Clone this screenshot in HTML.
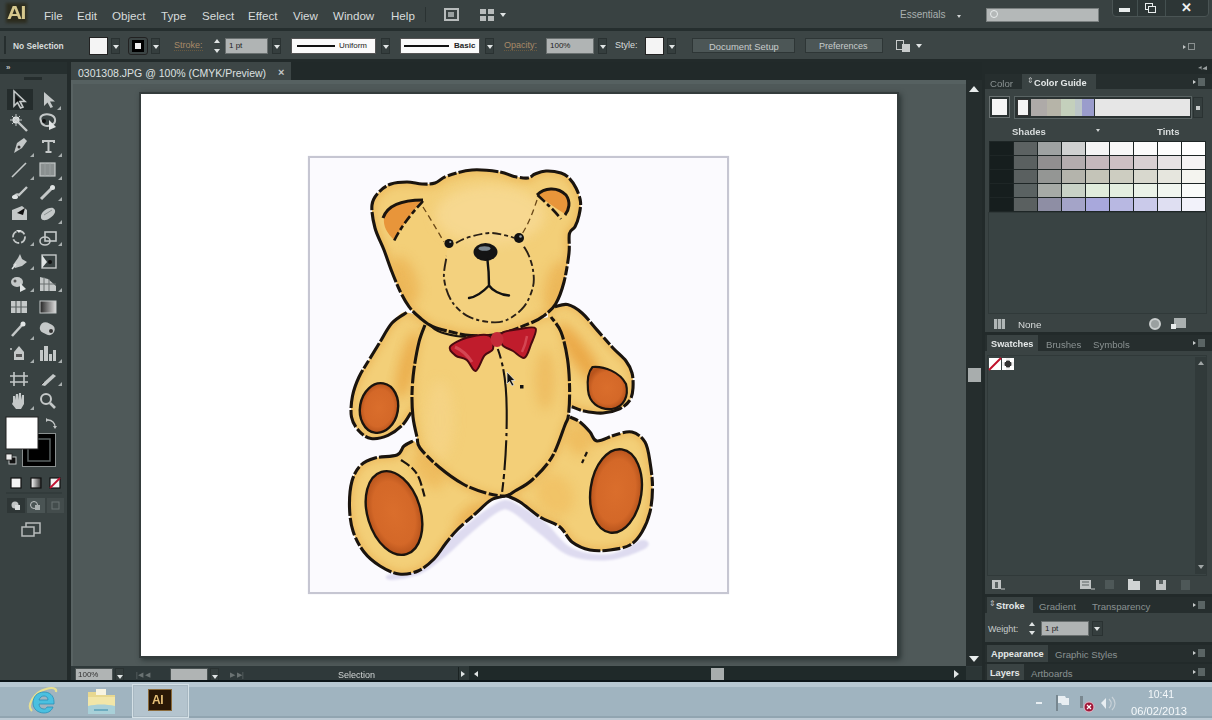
<!DOCTYPE html>
<html><head><meta charset="utf-8">
<style>
*{margin:0;padding:0;box-sizing:border-box}
html,body{width:1212px;height:720px;overflow:hidden;background:#394242;font-family:"Liberation Sans",sans-serif;color:#d8dcdc}
.a{position:absolute}
.t{position:absolute;white-space:nowrap;line-height:1}
.m{font-size:11.6px;color:#d8dcdc;top:10px}
.s{font-size:9px;color:#d8dcdc}
.dd{position:absolute;width:9px;height:16px;background:#353e3e;border:1px solid #2a3232}
.dd:after{content:"";position:absolute;left:1px;top:6px;border-left:3px solid transparent;border-right:3px solid transparent;border-top:4px solid #e0e4e4}
.tab{position:absolute;font-size:8.5px;color:#aab0b0;white-space:nowrap;line-height:1}
.tabA{position:absolute;background:#3a4343;color:#e8ecec;font-size:8.5px;font-weight:bold;white-space:nowrap;line-height:1}
.pm{position:absolute;width:12px;height:8px}
</style></head><body><div id="wrap" style="position:absolute;left:0;top:0;width:1212px;height:720px;overflow:hidden;filter:blur(0.45px)">
<!-- ============ menubar ============ -->
<div class="a" style="left:0;top:0;width:1212px;height:28px;background:#394242"></div>
<div class="a" style="left:0;top:28px;width:1212px;height:3px;background:#252e2e"></div>
<div class="a" style="left:6px;top:3px;width:21px;height:20px;background:#2c2c1e;filter:blur(1.5px)"></div>
<div class="t" style="left:7px;top:3px;font-size:19px;font-weight:bold;color:#d6c88e;letter-spacing:-1.5px;transform:scaleX(1.1);transform-origin:left top">AI</div>
<div class="t m" style="left:44px">File</div>
<div class="t m" style="left:77px">Edit</div>
<div class="t m" style="left:112px">Object</div>
<div class="t m" style="left:161px">Type</div>
<div class="t m" style="left:202px">Select</div>
<div class="t m" style="left:248px">Effect</div>
<div class="t m" style="left:293px">View</div>
<div class="t m" style="left:333px">Window</div>
<div class="t m" style="left:391px">Help</div>
<div class="a" style="left:425px;top:7px;width:1px;height:15px;background:#2a3232"></div>
<div class="a" style="left:444px;top:8px;width:15px;height:13px;border:2px solid #b8bcbc;background:#3a4242"></div>
<div class="a" style="left:448px;top:12px;width:6px;height:5px;background:#9aa0a0"></div>
<div class="a" style="left:480px;top:9px;width:6px;height:5px;background:#b8bcbc"></div>
<div class="a" style="left:488px;top:9px;width:6px;height:5px;background:#b8bcbc"></div>
<div class="a" style="left:480px;top:16px;width:6px;height:5px;background:#b8bcbc"></div>
<div class="a" style="left:488px;top:16px;width:6px;height:5px;background:#b8bcbc"></div>
<div class="a" style="left:500px;top:13px;border-left:3px solid transparent;border-right:3px solid transparent;border-top:4px solid #e0e4e4"></div>
<div class="t" style="left:900px;top:10px;font-size:10px;color:#aab0b0">Essentials</div>
<div class="a" style="left:957px;top:15px;border-left:2.5px solid transparent;border-right:2.5px solid transparent;border-top:3px solid #d0d4d4"></div>
<div class="a" style="left:986px;top:8px;width:113px;height:14px;background:#b4b8b8;border:1px solid #7a8080"></div>
<div class="a" style="left:990px;top:10px;width:8px;height:8px;border:1.5px solid #e8ecec;border-radius:50%"></div>
<div class="a" style="left:1112px;top:-2px;width:97px;height:19px;background:#2d3636;border:1px solid #4a5454;border-radius:0 0 4px 4px"></div>
<div class="a" style="left:1119px;top:8px;width:11px;height:4px;background:#e8ecec"></div>
<div class="a" style="left:1145px;top:3px;width:8px;height:7px;border:1.5px solid #e8ecec"></div>
<div class="a" style="left:1148px;top:6px;width:8px;height:7px;border:1.5px solid #e8ecec;background:#2d3636"></div>
<div class="t" style="left:1181px;top:1px;font-size:13px;font-weight:bold;color:#eef0f0">&#x2715;</div>
<div class="a" style="left:1137px;top:0;width:1px;height:16px;background:#445050"></div>
<div class="a" style="left:1165px;top:0;width:1px;height:16px;background:#445050"></div>

<!-- ============ control bar ============ -->
<div class="a" style="left:0;top:31px;width:1212px;height:28px;background:#3c4545"></div>
<div class="a" style="left:0;top:59px;width:1212px;height:3px;background:#222a2a"></div>
<div class="a" style="left:4px;top:36px;width:2px;height:18px;background:#262e2e"></div>
<div class="t s" style="left:13px;top:42px;font-weight:bold;font-size:8.4px">No Selection</div>
<div class="a" style="left:89px;top:37px;width:19px;height:18px;background:#f4f4f4;border:1px solid #222"></div>
<div class="dd" style="left:111px;top:38px"></div>
<div class="a" style="left:128px;top:37px;width:20px;height:18px;background:#3c4545;border:1px solid #222;border-radius:3px"></div>
<div class="a" style="left:132px;top:40px;width:12px;height:12px;background:#000"></div>
<div class="a" style="left:135px;top:43px;width:6px;height:6px;background:#eee"></div>
<div class="dd" style="left:151px;top:38px"></div>
<div class="t" style="left:174px;top:41px;font-size:9px;color:#a88a68;border-bottom:1px dotted #6a5a40">Stroke:</div>
<div class="a" style="left:214px;top:39px;border-left:3px solid transparent;border-right:3px solid transparent;border-bottom:4px solid #e0e4e4"></div>
<div class="a" style="left:214px;top:49px;border-left:3px solid transparent;border-right:3px solid transparent;border-top:4px solid #e0e4e4"></div>
<div class="a" style="left:225px;top:38px;width:43px;height:16px;background:#b0b4b4;border:1px solid #6a7070"></div>
<div class="t" style="left:229px;top:42px;font-size:8px;color:#222">1 pt</div>
<div class="dd" style="left:272px;top:38px"></div>
<div class="a" style="left:291px;top:38px;width:85px;height:16px;background:#fafafa;border:1px solid #555"></div>
<div class="a" style="left:297px;top:45px;width:38px;height:2px;background:#111"></div>
<div class="t" style="left:339px;top:42px;font-size:8px;color:#222">Uniform</div>
<div class="dd" style="left:381px;top:38px"></div>
<div class="a" style="left:400px;top:38px;width:80px;height:16px;background:#fafafa;border:1px solid #555"></div>
<div class="a" style="left:404px;top:45px;width:45px;height:2px;background:#111"></div>
<div class="t" style="left:454px;top:42px;font-size:8px;color:#222;font-weight:bold">Basic</div>
<div class="dd" style="left:485px;top:38px"></div>
<div class="t" style="left:504px;top:41px;font-size:9px;color:#a88a68;border-bottom:1px dotted #6a5a40">Opacity:</div>
<div class="a" style="left:546px;top:38px;width:48px;height:16px;background:#b0b4b4;border:1px solid #6a7070"></div>
<div class="t" style="left:550px;top:42px;font-size:8px;color:#222">100%</div>
<div class="dd" style="left:598px;top:38px"></div>
<div class="t s" style="left:615px;top:41px">Style:</div>
<div class="a" style="left:645px;top:37px;width:19px;height:18px;background:#f4f4f4;border:1px solid #222"></div>
<div class="dd" style="left:667px;top:38px"></div>
<div class="a" style="left:692px;top:38px;width:103px;height:15px;background:#4c5656;border:1px solid #2e3636"></div>
<div class="t s" style="left:709px;top:42px;color:#c8cccc;font-size:9.4px">Document Setup</div>
<div class="a" style="left:805px;top:38px;width:78px;height:15px;background:#4c5656;border:1px solid #2e3636"></div>
<div class="t s" style="left:819px;top:42px;color:#c8cccc">Preferences</div>
<div class="a" style="left:896px;top:40px;width:8px;height:10px;border:1.5px solid #c8cccc"></div>
<div class="a" style="left:902px;top:44px;width:8px;height:8px;background:#c8cccc"></div>
<div class="a" style="left:916px;top:44px;border-left:3px solid transparent;border-right:3px solid transparent;border-top:4px solid #e0e4e4"></div>
<div class="a" style="left:1188px;top:43px;width:7px;height:7px;border:1px solid #8a9090"></div>
<div class="a" style="left:1183px;top:45px;border-top:2px solid transparent;border-bottom:2px solid transparent;border-left:3px solid #c0c4c4"></div>

<!-- ============ tools panel ============ -->
<div class="a" style="left:0;top:62px;width:67px;height:620px;background:#394242"></div>
<div class="a" style="left:0;top:62px;width:67px;height:12px;background:#262f2f"></div>
<div class="t" style="left:6px;top:64px;font-size:8px;color:#c0c4c4;font-weight:bold">&#187;</div>
<div class="a" style="left:24px;top:77px;width:18px;height:3px;background:#252d2d"></div>
<div class="a" style="left:67px;top:62px;width:4px;height:620px;background:#232b2b"></div>
<div class="a" style="left:7px;top:89px;width:26px;height:21px;background:#242c2c"></div>
<svg class="a" style="left:0;top:0" width="67" height="560" viewBox="0 0 67 560"><defs><linearGradient id="gr"><stop offset="0" stop-color="#222"/><stop offset="1" stop-color="#ddd"/></linearGradient><linearGradient id="gr2"><stop offset="0" stop-color="#fff"/><stop offset="1" stop-color="#333"/></linearGradient></defs><path d="M14,91 L14,106 L17.5,102.5 L20.5,108 L23,107 L20,101.5 L25,101.5Z" fill="none" stroke="#c4c8c8" stroke-width="1.6"/><path d="M16,96 L16,102 L20,100Z" fill="#111"/><path d="M44,92 L44,106 L47.5,102.5 L50.5,108 L53,107 L50,101.5 L55,101.5Z" fill="#c4c8c8"/><path d="M57,110 l4,0 l0,-4z" fill="#a8aeae"/><circle cx="16" cy="120" r="3.5" fill="#e0e4e4"/><path d="M12,116 l8,8 M20,116 l-8,8 M16,114 v12 M10,120 h12" stroke="#c4c8c8" stroke-width="1"/><path d="M18,122 L27,131" stroke="#c4c8c8" stroke-width="2.4"/><path d="M41,121 C38,115 46,113 51,115 C56,117 57,123 51,125 C47,127 42,126 41,121Z" fill="none" stroke="#c4c8c8" stroke-width="2"/><circle cx="44" cy="121" r="2" fill="#111"/><path d="M49,120 L49,130 L56,127Z" fill="#e0e4e4"/><path d="M14,153 L17,143 L24,138 L27,141 L22,148 Z" fill="#c4c8c8"/><circle cx="19" cy="147" r="1.5" fill="#333"/><path d="M30,157 l4,0 l0,-4z" fill="#a8aeae"/><path d="M42,140 h13 v3 h-2 v-1 h-3.5 v9 h2 v2 h-6 v-2 h2 v-9 h-3.5 v1 h-2z" fill="#c4c8c8"/><path d="M58,157 l4,0 l0,-4z" fill="#a8aeae"/><path d="M12,177 L26,163" stroke="#c4c8c8" stroke-width="1.6"/><path d="M30,180 l4,0 l0,-4z" fill="#a8aeae"/><rect x="40" y="163" width="15" height="13" fill="#8a9090" stroke="#c4c8c8" stroke-width="1.2"/><path d="M45,163 v13 M50,163 v13" stroke="#9ca2a2" stroke-width="0.8"/><path d="M58,180 l4,0 l0,-4z" fill="#a8aeae"/><path d="M13,198 C15,194 18,194 19,195 L27,187" stroke="#c4c8c8" stroke-width="2.4" fill="none"/><ellipse cx="15" cy="197" rx="3" ry="2" fill="#e0e4e4"/><path d="M41,199 L52,188" stroke="#c4c8c8" stroke-width="3"/><circle cx="52.5" cy="187.5" r="2.5" fill="#e0e4e4"/><path d="M58,201 l4,0 l0,-4z" fill="#a8aeae"/><path d="M12,210 L22,206 L27,210 L27,220 L12,220Z" fill="#c4c8c8"/><path d="M17,213 L25,208 L23,215Z" fill="#111"/><path d="M41,218 C40,212 48,207 53,208 C57,210 55,215 50,218 C46,221 42,221 41,218Z" fill="#c4c8c8"/><path d="M44,215 L52,210" stroke="#8a9090" stroke-width="1"/><path d="M58,224 l4,0 l0,-4z" fill="#a8aeae"/><circle cx="19" cy="237" r="6" fill="none" stroke="#c4c8c8" stroke-width="1.8" stroke-dasharray="7 2"/><path d="M16,230 l5,0 l-2,3z" fill="#e0e4e4"/><path d="M30,246 l4,0 l0,-4z" fill="#a8aeae"/><rect x="45" y="232" width="11" height="9" fill="none" stroke="#c4c8c8" stroke-width="1.6"/><ellipse cx="45" cy="241" rx="5" ry="4" fill="none" stroke="#c4c8c8" stroke-width="1.6"/><path d="M58,246 l4,0 l0,-4z" fill="#a8aeae"/><path d="M13,265 L18,258 L20,254 L22,259 L27,262 L22,266 L15,268Z" fill="#c4c8c8"/><path d="M12,269 L16,264" stroke="#e0e4e4" stroke-width="1.5"/><path d="M30,270 l4,0 l0,-4z" fill="#a8aeae"/><rect x="42" y="255" width="14" height="13" fill="none" stroke="#c4c8c8" stroke-width="1.4"/><path d="M42,255 L47,262 L42,268Z" fill="#e0e4e4"/><circle cx="50" cy="262" r="2" fill="#111"/><ellipse cx="17" cy="282" rx="6" ry="5" fill="#c4c8c8"/><path d="M20,283 L20,292 L26,289Z" fill="#e0e4e4"/><circle cx="15" cy="281" r="1.5" fill="#555"/><path d="M30,292 l4,0 l0,-4z" fill="#a8aeae"/><path d="M40,277 L48,279 L56,286 L56,291 L40,291Z" fill="#c4c8c8"/><path d="M40,284 h16 M44,277 v14 M49,279 v12" stroke="#6a7070" stroke-width="1"/><path d="M58,292 l4,0 l0,-4z" fill="#a8aeae"/><rect x="11" y="301" width="16" height="12" fill="#c4c8c8"/><path d="M11,307 h16 M16,301 v12 M21,301 v12" stroke="#5a6262" stroke-width="1.2"/><rect x="40" y="301" width="16" height="12" fill="url(#gr)" stroke="#c4c8c8" stroke-width="1"/><path d="M12,336 L22,325" stroke="#c4c8c8" stroke-width="2.6"/><circle cx="23" cy="324" r="2.5" fill="#e0e4e4"/><path d="M30,340 l4,0 l0,-4z" fill="#a8aeae"/><rect x="40" y="323" width="15" height="11" rx="5" fill="#c4c8c8" transform="rotate(25 47 328)"/><circle cx="51" cy="331" r="2" fill="#333"/><path d="M14,352 L19,346 L24,352 L24,360 L14,360Z" fill="#c4c8c8"/><rect x="16" y="354" width="6" height="3" fill="#555"/><circle cx="11" cy="349" r="1" fill="#c4c8c8"/><path d="M30,363 l4,0 l0,-4z" fill="#a8aeae"/><path d="M40,350 h3 v11 h-3z M44,346 h4 v15 h-4z M49,354 h3 v7 h-3z M53,350 h3 v11 h-3z" fill="#c4c8c8"/><path d="M58,363 l4,0 l0,-4z" fill="#a8aeae"/><path d="M14,372 v14 M24,372 v14 M10,376 h18 M10,382 h18" stroke="#c4c8c8" stroke-width="1.6"/><path d="M41,385 L53,374 L56,376 L45,386Z" fill="#c4c8c8"/><path d="M41,385 L44,382" stroke="#333"/><path d="M58,386 l4,0 l0,-4z" fill="#a8aeae"/><path d="M13,402 L13,396 L15,396 L15,400 L16,394 L18,394 L18,400 L19,393 L21,393 L21,400 L22,395 L24,395 L24,404 L21,409 L16,409 L12,404Z" fill="#c4c8c8"/><path d="M30,410 l4,0 l0,-4z" fill="#a8aeae"/><circle cx="46" cy="399" r="5" fill="none" stroke="#c4c8c8" stroke-width="2"/><path d="M50,403 L55,408" stroke="#c4c8c8" stroke-width="2.6"/><rect x="22.5" y="433.5" width="33" height="33" fill="#000" stroke="#8a9090" stroke-width="1"/><rect x="28" y="439" width="22" height="22" fill="none" stroke="#5a6262" stroke-width="1.5"/><rect x="31" y="442" width="16" height="16" fill="#000"/><rect x="6" y="417" width="32" height="32" fill="#ffffff" stroke="#222" stroke-width="1"/><path d="M48,420 C52,420 55,423 55,427" fill="none" stroke="#c0c4c4" stroke-width="1.3"/><path d="M46,418 l3,2 l-3,2z M53,426 l2,3 l2,-3z" fill="#c0c4c4"/><rect x="9" y="457" width="7" height="7" fill="#111" stroke="#c0c4c4" stroke-width="1"/><rect x="6" y="454" width="6" height="6" fill="#eee" stroke="#222" stroke-width="0.8"/><rect x="11" y="478" width="10" height="10" fill="#f4f4f4" stroke="#111" stroke-width="1.2"/><rect x="31" y="478" width="10" height="10" fill="url(#gr2)" stroke="#111" stroke-width="1.2"/><rect x="50" y="478" width="10" height="10" fill="#f4f4f4" stroke="#111" stroke-width="1.2"/><path d="M50,488 L60,478" stroke="#c01030" stroke-width="1.8"/><path d="M6,493 h56" stroke="#2c3434" stroke-width="1"/><rect x="7" y="498" width="18" height="15" fill="#2e3636"/><circle cx="15" cy="505" r="3.5" fill="#c0c4c4"/><rect x="15" y="505" width="5" height="5" fill="#d8dcdc"/><rect x="27" y="498" width="18" height="15" fill="#4a5454"/><circle cx="34" cy="505" r="3.5" fill="none" stroke="#c0c4c4"/><rect x="35" y="505" width="5" height="5" fill="#aab0b0"/><rect x="47" y="498" width="17" height="15" fill="#434c4c"/><rect x="52" y="502" width="7" height="7" fill="none" stroke="#6a7272"/><rect x="26" y="523" width="14" height="10" fill="none" stroke="#b8bcbc" stroke-width="1.5"/><rect x="22" y="527" width="12" height="9" fill="#394242" stroke="#b8bcbc" stroke-width="1.5"/></svg>

<!-- ============ document area ============ -->
<div class="a" style="left:71px;top:62px;width:912px;height:18px;background:#212929"></div>
<div class="a" style="left:71px;top:62px;width:220px;height:18px;background:#3d4646"></div>
<div class="t" style="left:78px;top:68px;font-size:10.5px;color:#dde1e1">0301308.JPG @ 100% (CMYK/Preview)</div>
<div class="t" style="left:278px;top:67px;font-size:11px;color:#c4c8c8;font-weight:bold">&#215;</div>
<div class="a" style="left:71px;top:80px;width:895px;height:587px;background:#4f5959"></div>
<div class="a" style="left:71px;top:80px;width:895px;height:4px;background:#566161"></div>
<div class="a" style="left:71px;top:80px;width:2px;height:586px;background:#586262"></div>
<div class="a" style="left:139px;top:92px;width:760px;height:566px;background:#343c3c;box-shadow:2px 2px 5px rgba(20,28,28,0.6)"></div>
<div class="a" style="left:141px;top:94px;width:756px;height:562px;background:#ffffff"></div>
<div class="a" style="left:308px;top:156px;width:421px;height:438px;background:#fbfafe;border:2px solid #c6c6d2;box-shadow:0 0 1px #d8d8e4"></div>
<svg class="a" style="left:0;top:0" width="1212" height="720" viewBox="0 0 1212 720"><defs><filter id="bl" x="-20%" y="-20%" width="140%" height="140%"><feGaussianBlur stdDeviation="3"/></filter><radialGradient id="padg"><stop offset="0" stop-color="#da6e2c"/><stop offset="0.75" stop-color="#d46828"/><stop offset="1" stop-color="#b8541c"/></radialGradient><filter id="bl3" x="-50%" y="-50%" width="200%" height="200%"><feGaussianBlur stdDeviation="6"/></filter><filter id="bl2" x="-20%" y="-20%" width="140%" height="140%"><feGaussianBlur stdDeviation="1.2"/></filter><clipPath id="c1"><path d="M413.0,441.0 C410.3,440.7 406.7,443.7 404.0,446.0 C401.3,448.3 401.8,453.0 397.0,455.0 C392.2,457.0 381.0,456.3 375.0,458.0 C369.0,459.7 364.8,461.2 361.0,465.0 C357.2,468.8 353.9,474.0 352.0,481.0 C350.1,488.0 349.3,498.7 349.5,507.0 C349.7,515.3 350.6,523.5 353.0,531.0 C355.4,538.5 359.5,546.2 364.0,552.0 C368.5,557.8 374.2,562.3 380.0,566.0 C385.8,569.7 392.7,573.2 399.0,574.0 C405.3,574.8 412.2,573.5 418.0,571.0 C423.8,568.5 429.3,563.7 434.0,559.0 C438.7,554.3 442.0,548.0 446.0,543.0 C450.0,538.0 453.2,533.8 458.0,529.0 C462.8,524.2 469.5,518.8 475.0,514.0 C480.5,509.2 486.0,503.0 491.0,500.0 C496.0,497.0 505.8,497.2 505.0,496.0 C504.2,494.8 493.0,495.0 486.0,493.0 C479.0,491.0 470.8,488.3 463.0,484.0 C455.2,479.7 446.2,473.0 439.0,467.0 C431.8,461.0 424.3,452.3 420.0,448.0 C415.7,443.7 415.7,441.3 413.0,441.0Z"/></clipPath><clipPath id="c2"><path d="M495.0,497.0 C496.7,496.3 508.8,493.8 515.0,491.0 C521.2,488.2 525.8,485.7 532.0,480.0 C538.2,474.3 546.5,466.2 552.0,457.0 C557.5,447.8 562.0,431.7 565.0,425.0 C568.0,418.3 567.5,417.5 570.0,417.0 C572.5,416.5 576.7,419.5 580.0,422.0 C583.3,424.5 587.2,428.8 590.0,432.0 C592.8,435.2 592.8,440.5 597.0,441.0 C601.2,441.5 609.2,436.5 615.0,435.0 C620.8,433.5 627.0,430.8 632.0,432.0 C637.0,433.2 642.0,437.0 645.0,442.0 C648.0,447.0 648.8,454.5 650.0,462.0 C651.2,469.5 652.5,478.7 652.5,487.0 C652.5,495.3 651.8,504.5 650.0,512.0 C648.2,519.5 645.3,526.5 642.0,532.0 C638.7,537.5 635.3,542.0 630.0,545.0 C624.7,548.0 616.7,549.2 610.0,550.0 C603.3,550.8 596.3,551.3 590.0,550.0 C583.7,548.7 577.0,545.8 572.0,542.0 C567.0,538.2 565.3,531.2 560.0,527.0 C554.7,522.8 546.7,521.2 540.0,517.0 C533.3,512.8 525.8,505.7 520.0,502.0 C514.2,498.3 509.2,495.8 505.0,495.0 C500.8,494.2 493.3,497.7 495.0,497.0Z"/></clipPath><clipPath id="c3"><path d="M406.7,312.5 C400.7,311.3 396.4,318.1 392.0,323.0 C387.6,327.9 383.8,335.8 380.0,342.0 C376.2,348.2 372.5,354.2 369.0,360.0 C365.5,365.8 361.8,371.0 359.0,377.0 C356.2,383.0 353.8,389.3 352.5,396.0 C351.2,402.7 350.4,411.2 351.5,417.0 C352.6,422.8 355.8,427.4 359.0,431.0 C362.2,434.6 366.2,437.8 371.0,438.5 C375.8,439.2 382.8,437.6 388.0,435.4 C393.2,433.1 398.7,428.8 402.5,425.0 C406.3,421.2 408.4,416.7 411.0,412.5 C413.6,408.3 415.2,413.8 418.0,400.0 C420.8,386.2 429.9,344.6 428.0,330.0 C426.1,315.4 412.7,313.7 406.7,312.5Z"/></clipPath><clipPath id="c4"><path d="M555.0,306.7 C558.2,304.5 563.0,303.6 567.5,304.6 C572.0,305.7 577.1,308.8 582.0,313.0 C586.9,317.2 591.5,323.8 596.7,329.6 C601.9,335.4 608.1,342.8 613.0,348.0 C617.9,353.2 622.8,356.8 626.0,361.0 C629.2,365.2 630.8,368.5 632.0,373.0 C633.2,377.5 633.3,383.5 633.0,388.0 C632.7,392.5 632.2,396.5 630.0,400.0 C627.8,403.5 624.1,406.6 619.6,408.8 C615.1,410.9 608.9,412.6 603.0,413.0 C597.1,413.4 589.2,412.1 584.0,411.0 C578.8,409.9 575.4,408.5 571.7,406.7 C568.0,404.9 566.0,414.8 562.0,400.0 C558.0,385.2 549.2,333.6 548.0,318.0 C546.8,302.4 551.8,308.9 555.0,306.7Z"/></clipPath><clipPath id="c5"><path d="M425.0,325.0 C411.5,327.0 420.8,334.7 419.0,342.0 C417.2,349.3 415.2,360.3 414.0,369.0 C412.8,377.7 412.2,386.0 412.0,394.0 C411.8,402.0 412.2,409.8 413.0,417.0 C413.8,424.2 415.8,431.8 417.0,437.0 C418.2,442.2 416.3,443.0 420.0,448.0 C423.7,453.0 431.8,461.0 439.0,467.0 C446.2,473.0 455.2,479.7 463.0,484.0 C470.8,488.3 479.0,491.0 486.0,493.0 C493.0,495.0 500.2,496.3 505.0,496.0 C509.8,495.7 510.5,493.7 515.0,491.0 C519.5,488.3 525.8,485.7 532.0,480.0 C538.2,474.3 546.5,466.2 552.0,457.0 C557.5,447.8 562.2,432.0 565.0,425.0 C567.8,418.0 567.7,421.2 568.5,415.0 C569.3,408.8 569.8,397.3 569.6,388.0 C569.4,378.7 568.9,368.3 567.5,359.0 C566.1,349.7 563.8,339.0 561.0,332.0 C558.2,325.0 561.2,317.3 551.0,317.0 C540.8,316.7 521.0,328.7 500.0,330.0 C479.0,331.3 438.5,323.0 425.0,325.0Z"/></clipPath><clipPath id="c6"><path d="M384.0,250.0 C381.2,242.7 377.0,235.5 375.0,228.0 C373.0,220.5 371.3,211.0 372.0,205.0 C372.7,199.0 375.8,195.5 379.0,192.0 C382.2,188.5 386.3,185.7 391.0,184.0 C395.7,182.3 401.8,182.0 407.0,182.0 C412.2,182.0 417.3,183.8 422.0,184.0 C426.7,184.2 430.8,184.3 435.0,183.0 C439.2,181.7 440.8,178.2 447.0,176.0 C453.2,173.8 463.2,170.7 472.0,170.0 C480.8,169.3 493.0,170.9 500.0,172.0 C507.0,173.1 509.3,175.5 514.0,176.5 C518.7,177.5 524.5,178.4 528.0,178.0 C531.5,177.6 532.0,175.2 535.0,174.0 C538.0,172.8 541.7,171.2 546.0,171.0 C550.3,170.8 557.2,171.8 561.0,173.0 C564.8,174.2 566.5,175.5 569.0,178.0 C571.5,180.5 574.1,184.1 576.0,188.0 C577.9,191.9 580.0,197.1 580.5,201.7 C581.0,206.3 579.9,211.3 579.0,215.5 C578.1,219.7 576.6,223.7 575.0,226.7 C573.4,229.7 570.4,229.2 569.4,233.6 C568.4,238.0 569.9,244.9 569.0,253.0 C568.1,261.1 566.2,273.5 564.0,282.0 C561.8,290.5 558.9,298.4 555.6,304.0 C552.3,309.6 547.8,312.6 544.0,315.6 C540.2,318.6 540.3,318.9 533.0,322.0 C525.7,325.1 510.3,331.7 500.0,334.0 C489.7,336.3 478.4,335.8 471.0,335.6 C463.6,335.4 461.9,334.5 455.6,333.0 C449.3,331.5 438.9,329.2 433.0,326.7 C427.1,324.2 424.0,321.1 420.0,317.8 C416.0,314.5 412.3,311.2 409.0,306.7 C405.7,302.2 402.8,296.8 400.0,291.0 C397.2,285.2 394.7,278.8 392.0,272.0 C389.3,265.2 386.8,257.3 384.0,250.0Z"/></clipPath></defs><path d="M440.0,548.0 C448.3,540.3 461.3,529.0 470.0,522.0 C478.7,515.0 486.0,509.7 492.0,506.0 C498.0,502.3 501.3,500.0 506.0,500.0 C510.7,500.0 513.5,502.3 520.0,506.0 C526.5,509.7 536.3,515.0 545.0,522.0 C553.7,529.0 561.2,542.7 572.0,548.0 C582.8,553.3 598.3,555.3 610.0,554.0 C621.7,552.7 636.0,541.0 642.0,540.0 C648.0,539.0 651.3,544.7 646.0,548.0 C640.7,551.3 622.7,558.7 610.0,560.0 C597.3,561.3 581.7,560.3 570.0,556.0 C558.3,551.7 549.7,541.3 540.0,534.0 C530.3,526.7 519.0,515.7 512.0,512.0 C505.0,508.3 505.0,508.3 498.0,512.0 C491.0,515.7 478.7,526.7 470.0,534.0 C461.3,541.3 454.3,549.3 446.0,556.0 C437.7,562.7 429.0,570.0 420.0,574.0 C411.0,578.0 397.3,579.8 392.0,580.0 C386.7,580.2 383.3,577.0 388.0,575.0 C392.7,573.0 411.3,572.5 420.0,568.0 C428.7,563.5 431.7,555.7 440.0,548.0Z" fill="#dedbf0" filter="url(#bl2)"/>
<path d="M413.0,441.0 C410.3,440.7 406.7,443.7 404.0,446.0 C401.3,448.3 401.8,453.0 397.0,455.0 C392.2,457.0 381.0,456.3 375.0,458.0 C369.0,459.7 364.8,461.2 361.0,465.0 C357.2,468.8 353.9,474.0 352.0,481.0 C350.1,488.0 349.3,498.7 349.5,507.0 C349.7,515.3 350.6,523.5 353.0,531.0 C355.4,538.5 359.5,546.2 364.0,552.0 C368.5,557.8 374.2,562.3 380.0,566.0 C385.8,569.7 392.7,573.2 399.0,574.0 C405.3,574.8 412.2,573.5 418.0,571.0 C423.8,568.5 429.3,563.7 434.0,559.0 C438.7,554.3 442.0,548.0 446.0,543.0 C450.0,538.0 453.2,533.8 458.0,529.0 C462.8,524.2 469.5,518.8 475.0,514.0 C480.5,509.2 486.0,503.0 491.0,500.0 C496.0,497.0 505.8,497.2 505.0,496.0 C504.2,494.8 493.0,495.0 486.0,493.0 C479.0,491.0 470.8,488.3 463.0,484.0 C455.2,479.7 446.2,473.0 439.0,467.0 C431.8,461.0 424.3,452.3 420.0,448.0 C415.7,443.7 415.7,441.3 413.0,441.0Z" fill="#f3cf78"/><g clip-path="url(#c1)"><ellipse cx="428" cy="470" rx="12" ry="22" transform="rotate(-40 428 470)" fill="#eaa842" opacity="0.45" filter="url(#bl3)"/><ellipse cx="470" cy="515" rx="18" ry="8" transform="rotate(-40 470 515)" fill="#e8a23c" opacity="0.5" filter="url(#bl3)"/><path d="M413.0,441.0 C410.3,440.7 406.7,443.7 404.0,446.0 C401.3,448.3 401.8,453.0 397.0,455.0 C392.2,457.0 381.0,456.3 375.0,458.0 C369.0,459.7 364.8,461.2 361.0,465.0 C357.2,468.8 353.9,474.0 352.0,481.0 C350.1,488.0 349.3,498.7 349.5,507.0 C349.7,515.3 350.6,523.5 353.0,531.0 C355.4,538.5 359.5,546.2 364.0,552.0 C368.5,557.8 374.2,562.3 380.0,566.0 C385.8,569.7 392.7,573.2 399.0,574.0 C405.3,574.8 412.2,573.5 418.0,571.0 C423.8,568.5 429.3,563.7 434.0,559.0 C438.7,554.3 442.0,548.0 446.0,543.0 C450.0,538.0 453.2,533.8 458.0,529.0 C462.8,524.2 469.5,518.8 475.0,514.0 C480.5,509.2 486.0,503.0 491.0,500.0 C496.0,497.0 505.8,497.2 505.0,496.0 C504.2,494.8 493.0,495.0 486.0,493.0 C479.0,491.0 470.8,488.3 463.0,484.0 C455.2,479.7 446.2,473.0 439.0,467.0 C431.8,461.0 424.3,452.3 420.0,448.0 C415.7,443.7 415.7,441.3 413.0,441.0Z" fill="none" stroke="#e8a848" stroke-width="9" filter="url(#bl)" opacity="0.45"/></g>
<path d="M495.0,497.0 C496.7,496.3 508.8,493.8 515.0,491.0 C521.2,488.2 525.8,485.7 532.0,480.0 C538.2,474.3 546.5,466.2 552.0,457.0 C557.5,447.8 562.0,431.7 565.0,425.0 C568.0,418.3 567.5,417.5 570.0,417.0 C572.5,416.5 576.7,419.5 580.0,422.0 C583.3,424.5 587.2,428.8 590.0,432.0 C592.8,435.2 592.8,440.5 597.0,441.0 C601.2,441.5 609.2,436.5 615.0,435.0 C620.8,433.5 627.0,430.8 632.0,432.0 C637.0,433.2 642.0,437.0 645.0,442.0 C648.0,447.0 648.8,454.5 650.0,462.0 C651.2,469.5 652.5,478.7 652.5,487.0 C652.5,495.3 651.8,504.5 650.0,512.0 C648.2,519.5 645.3,526.5 642.0,532.0 C638.7,537.5 635.3,542.0 630.0,545.0 C624.7,548.0 616.7,549.2 610.0,550.0 C603.3,550.8 596.3,551.3 590.0,550.0 C583.7,548.7 577.0,545.8 572.0,542.0 C567.0,538.2 565.3,531.2 560.0,527.0 C554.7,522.8 546.7,521.2 540.0,517.0 C533.3,512.8 525.8,505.7 520.0,502.0 C514.2,498.3 509.2,495.8 505.0,495.0 C500.8,494.2 493.3,497.7 495.0,497.0Z" fill="#f3cf78"/><g clip-path="url(#c2)"><ellipse cx="578" cy="440" rx="12" ry="16" transform="rotate(-30 578 440)" fill="#eaa842" opacity="0.45" filter="url(#bl3)"/><ellipse cx="555" cy="495" rx="18" ry="22" transform="rotate(-30 555 495)" fill="#eeae48" opacity="0.35" filter="url(#bl3)"/><path d="M495.0,497.0 C496.7,496.3 508.8,493.8 515.0,491.0 C521.2,488.2 525.8,485.7 532.0,480.0 C538.2,474.3 546.5,466.2 552.0,457.0 C557.5,447.8 562.0,431.7 565.0,425.0 C568.0,418.3 567.5,417.5 570.0,417.0 C572.5,416.5 576.7,419.5 580.0,422.0 C583.3,424.5 587.2,428.8 590.0,432.0 C592.8,435.2 592.8,440.5 597.0,441.0 C601.2,441.5 609.2,436.5 615.0,435.0 C620.8,433.5 627.0,430.8 632.0,432.0 C637.0,433.2 642.0,437.0 645.0,442.0 C648.0,447.0 648.8,454.5 650.0,462.0 C651.2,469.5 652.5,478.7 652.5,487.0 C652.5,495.3 651.8,504.5 650.0,512.0 C648.2,519.5 645.3,526.5 642.0,532.0 C638.7,537.5 635.3,542.0 630.0,545.0 C624.7,548.0 616.7,549.2 610.0,550.0 C603.3,550.8 596.3,551.3 590.0,550.0 C583.7,548.7 577.0,545.8 572.0,542.0 C567.0,538.2 565.3,531.2 560.0,527.0 C554.7,522.8 546.7,521.2 540.0,517.0 C533.3,512.8 525.8,505.7 520.0,502.0 C514.2,498.3 509.2,495.8 505.0,495.0 C500.8,494.2 493.3,497.7 495.0,497.0Z" fill="none" stroke="#e8a848" stroke-width="9" filter="url(#bl)" opacity="0.45"/></g>
<path d="M413.0,441.0 C411.5,441.8 406.7,443.7 404.0,446.0 C401.3,448.3 401.8,453.0 397.0,455.0 C392.2,457.0 381.0,456.3 375.0,458.0 C369.0,459.7 364.8,461.2 361.0,465.0 C357.2,468.8 353.9,474.0 352.0,481.0 C350.1,488.0 349.3,498.7 349.5,507.0 C349.7,515.3 350.6,523.5 353.0,531.0 C355.4,538.5 359.5,546.2 364.0,552.0 C368.5,557.8 374.2,562.3 380.0,566.0 C385.8,569.7 392.7,573.2 399.0,574.0 C405.3,574.8 412.2,573.5 418.0,571.0 C423.8,568.5 429.3,563.7 434.0,559.0 C438.7,554.3 442.0,548.0 446.0,543.0 C450.0,538.0 453.2,533.8 458.0,529.0 C462.8,524.2 469.5,518.8 475.0,514.0 C480.5,509.2 486.0,503.0 491.0,500.0 C496.0,497.0 502.7,496.7 505.0,496.0" fill="none" stroke="#1a140e" stroke-width="3.1" stroke-dasharray="40 2 18 2.5 9 2" stroke-linecap="butt"/>
<path d="M505.0,495.0 C507.5,496.2 514.2,498.3 520.0,502.0 C525.8,505.7 533.3,512.8 540.0,517.0 C546.7,521.2 554.7,522.8 560.0,527.0 C565.3,531.2 567.0,538.2 572.0,542.0 C577.0,545.8 583.7,548.7 590.0,550.0 C596.3,551.3 603.3,550.8 610.0,550.0 C616.7,549.2 624.7,548.0 630.0,545.0 C635.3,542.0 638.7,537.5 642.0,532.0 C645.3,526.5 648.2,519.5 650.0,512.0 C651.8,504.5 652.5,495.3 652.5,487.0 C652.5,478.7 651.2,469.5 650.0,462.0 C648.8,454.5 648.0,447.0 645.0,442.0 C642.0,437.0 637.0,433.2 632.0,432.0 C627.0,430.8 620.8,433.5 615.0,435.0 C609.2,436.5 601.2,441.5 597.0,441.0 C592.8,440.5 592.8,435.2 590.0,432.0 C587.2,428.8 583.3,424.5 580.0,422.0 C576.7,419.5 571.7,417.8 570.0,417.0" fill="none" stroke="#1a140e" stroke-width="3.1" stroke-dasharray="40 2 18 2.5 9 2" stroke-linecap="butt"/>
<path d="M401.0,460.0 C402.8,461.3 409.0,465.0 412.0,468.0 C415.0,471.0 416.8,473.0 419.0,478.0 C421.2,483.0 424.0,494.7 425.0,498.0" fill="none" stroke="#1a140e" stroke-width="2.2" stroke-dasharray="10 3 8 3" stroke-linecap="butt"/>
<path d="M587.0,452.0 C586.2,453.8 582.8,461.2 582.0,463.0" fill="none" stroke="#1a140e" stroke-width="2.2" stroke-dasharray="5 3" stroke-linecap="butt"/>
<ellipse cx="394" cy="513" rx="26.5" ry="43" transform="rotate(-17 394 513)" fill="url(#padg)" stroke="#1a140e" stroke-width="2.4"/><ellipse cx="392" cy="509" rx="14.575000000000001" ry="25.8" transform="rotate(-17 394 513)" fill="#d06a28" opacity="0.0"/>
<ellipse cx="616" cy="491" rx="25.5" ry="42" transform="rotate(8 616 491)" fill="url(#padg)" stroke="#1a140e" stroke-width="2.4"/><ellipse cx="614" cy="487" rx="14.025" ry="25.2" transform="rotate(8 616 491)" fill="#d06a28" opacity="0.0"/>
<path d="M406.7,312.5 C400.7,311.3 396.4,318.1 392.0,323.0 C387.6,327.9 383.8,335.8 380.0,342.0 C376.2,348.2 372.5,354.2 369.0,360.0 C365.5,365.8 361.8,371.0 359.0,377.0 C356.2,383.0 353.8,389.3 352.5,396.0 C351.2,402.7 350.4,411.2 351.5,417.0 C352.6,422.8 355.8,427.4 359.0,431.0 C362.2,434.6 366.2,437.8 371.0,438.5 C375.8,439.2 382.8,437.6 388.0,435.4 C393.2,433.1 398.7,428.8 402.5,425.0 C406.3,421.2 408.4,416.7 411.0,412.5 C413.6,408.3 415.2,413.8 418.0,400.0 C420.8,386.2 429.9,344.6 428.0,330.0 C426.1,315.4 412.7,313.7 406.7,312.5Z" fill="#f3cf78"/><g clip-path="url(#c3)"><ellipse cx="408" cy="365" rx="9" ry="35" transform="rotate(15 408 365)" fill="#e8a23c" opacity="0.7" filter="url(#bl3)"/><path d="M406.7,312.5 C400.7,311.3 396.4,318.1 392.0,323.0 C387.6,327.9 383.8,335.8 380.0,342.0 C376.2,348.2 372.5,354.2 369.0,360.0 C365.5,365.8 361.8,371.0 359.0,377.0 C356.2,383.0 353.8,389.3 352.5,396.0 C351.2,402.7 350.4,411.2 351.5,417.0 C352.6,422.8 355.8,427.4 359.0,431.0 C362.2,434.6 366.2,437.8 371.0,438.5 C375.8,439.2 382.8,437.6 388.0,435.4 C393.2,433.1 398.7,428.8 402.5,425.0 C406.3,421.2 408.4,416.7 411.0,412.5 C413.6,408.3 415.2,413.8 418.0,400.0 C420.8,386.2 429.9,344.6 428.0,330.0 C426.1,315.4 412.7,313.7 406.7,312.5Z" fill="none" stroke="#e8a848" stroke-width="9" filter="url(#bl)" opacity="0.45"/></g>
<path d="M555.0,306.7 C558.2,304.5 563.0,303.6 567.5,304.6 C572.0,305.7 577.1,308.8 582.0,313.0 C586.9,317.2 591.5,323.8 596.7,329.6 C601.9,335.4 608.1,342.8 613.0,348.0 C617.9,353.2 622.8,356.8 626.0,361.0 C629.2,365.2 630.8,368.5 632.0,373.0 C633.2,377.5 633.3,383.5 633.0,388.0 C632.7,392.5 632.2,396.5 630.0,400.0 C627.8,403.5 624.1,406.6 619.6,408.8 C615.1,410.9 608.9,412.6 603.0,413.0 C597.1,413.4 589.2,412.1 584.0,411.0 C578.8,409.9 575.4,408.5 571.7,406.7 C568.0,404.9 566.0,414.8 562.0,400.0 C558.0,385.2 549.2,333.6 548.0,318.0 C546.8,302.4 551.8,308.9 555.0,306.7Z" fill="#f3cf78"/><g clip-path="url(#c4)"><ellipse cx="580" cy="355" rx="10" ry="38" transform="rotate(-35 580 355)" fill="#e89c38" opacity="0.75" filter="url(#bl3)"/><path d="M555.0,306.7 C558.2,304.5 563.0,303.6 567.5,304.6 C572.0,305.7 577.1,308.8 582.0,313.0 C586.9,317.2 591.5,323.8 596.7,329.6 C601.9,335.4 608.1,342.8 613.0,348.0 C617.9,353.2 622.8,356.8 626.0,361.0 C629.2,365.2 630.8,368.5 632.0,373.0 C633.2,377.5 633.3,383.5 633.0,388.0 C632.7,392.5 632.2,396.5 630.0,400.0 C627.8,403.5 624.1,406.6 619.6,408.8 C615.1,410.9 608.9,412.6 603.0,413.0 C597.1,413.4 589.2,412.1 584.0,411.0 C578.8,409.9 575.4,408.5 571.7,406.7 C568.0,404.9 566.0,414.8 562.0,400.0 C558.0,385.2 549.2,333.6 548.0,318.0 C546.8,302.4 551.8,308.9 555.0,306.7Z" fill="none" stroke="#e8a848" stroke-width="9" filter="url(#bl)" opacity="0.45"/></g>
<path d="M406.7,312.5 C404.2,314.2 396.4,318.1 392.0,323.0 C387.6,327.9 383.8,335.8 380.0,342.0 C376.2,348.2 372.5,354.2 369.0,360.0 C365.5,365.8 361.8,371.0 359.0,377.0 C356.2,383.0 353.8,389.3 352.5,396.0 C351.2,402.7 350.4,411.2 351.5,417.0 C352.6,422.8 355.8,427.4 359.0,431.0 C362.2,434.6 366.2,437.8 371.0,438.5 C375.8,439.2 382.8,437.6 388.0,435.4 C393.2,433.1 398.7,428.8 402.5,425.0 C406.3,421.2 409.6,414.6 411.0,412.5" fill="none" stroke="#1a140e" stroke-width="3.1" stroke-dasharray="40 2 18 2.5 9 2" stroke-linecap="butt"/>
<path d="M555.0,306.7 C557.1,306.4 563.0,303.6 567.5,304.6 C572.0,305.7 577.1,308.8 582.0,313.0 C586.9,317.2 591.5,323.8 596.7,329.6 C601.9,335.4 608.1,342.8 613.0,348.0 C617.9,353.2 622.8,356.8 626.0,361.0 C629.2,365.2 630.8,368.5 632.0,373.0 C633.2,377.5 633.3,383.5 633.0,388.0 C632.7,392.5 632.2,396.5 630.0,400.0 C627.8,403.5 624.1,406.6 619.6,408.8 C615.1,410.9 608.9,412.6 603.0,413.0 C597.1,413.4 589.2,412.1 584.0,411.0 C578.8,409.9 573.8,407.4 571.7,406.7" fill="none" stroke="#1a140e" stroke-width="3.1" stroke-dasharray="40 2 18 2.5 9 2" stroke-linecap="butt"/>
<ellipse cx="379" cy="408" rx="19" ry="25" transform="rotate(10 379 408)" fill="url(#padg)" stroke="#1a140e" stroke-width="2.4"/><ellipse cx="377" cy="404" rx="10.450000000000001" ry="15.0" transform="rotate(10 379 408)" fill="#d06a28" opacity="0.0"/>
<path d="M592.5,367 C604,366 620,372 626,384 C629,396 624,407 612,409 C598,410 589,402 588,390 C587,380 588,372 592.5,367Z" fill="url(#padg)" stroke="#1a140e" stroke-width="2.2"/>
<path d="M425.0,325.0 C411.5,327.0 420.8,334.7 419.0,342.0 C417.2,349.3 415.2,360.3 414.0,369.0 C412.8,377.7 412.2,386.0 412.0,394.0 C411.8,402.0 412.2,409.8 413.0,417.0 C413.8,424.2 415.8,431.8 417.0,437.0 C418.2,442.2 416.3,443.0 420.0,448.0 C423.7,453.0 431.8,461.0 439.0,467.0 C446.2,473.0 455.2,479.7 463.0,484.0 C470.8,488.3 479.0,491.0 486.0,493.0 C493.0,495.0 500.2,496.3 505.0,496.0 C509.8,495.7 510.5,493.7 515.0,491.0 C519.5,488.3 525.8,485.7 532.0,480.0 C538.2,474.3 546.5,466.2 552.0,457.0 C557.5,447.8 562.2,432.0 565.0,425.0 C567.8,418.0 567.7,421.2 568.5,415.0 C569.3,408.8 569.8,397.3 569.6,388.0 C569.4,378.7 568.9,368.3 567.5,359.0 C566.1,349.7 563.8,339.0 561.0,332.0 C558.2,325.0 561.2,317.3 551.0,317.0 C540.8,316.7 521.0,328.7 500.0,330.0 C479.0,331.3 438.5,323.0 425.0,325.0Z" fill="#f3cf78"/><g clip-path="url(#c5)"><ellipse cx="440" cy="420" rx="14" ry="40" transform="rotate(0 440 420)" fill="#f6d68c" opacity="0.6" filter="url(#bl3)"/><ellipse cx="545" cy="380" rx="10" ry="30" transform="rotate(0 545 380)" fill="#e9aa48" opacity="0.45" filter="url(#bl3)"/><path d="M425.0,325.0 C411.5,327.0 420.8,334.7 419.0,342.0 C417.2,349.3 415.2,360.3 414.0,369.0 C412.8,377.7 412.2,386.0 412.0,394.0 C411.8,402.0 412.2,409.8 413.0,417.0 C413.8,424.2 415.8,431.8 417.0,437.0 C418.2,442.2 416.3,443.0 420.0,448.0 C423.7,453.0 431.8,461.0 439.0,467.0 C446.2,473.0 455.2,479.7 463.0,484.0 C470.8,488.3 479.0,491.0 486.0,493.0 C493.0,495.0 500.2,496.3 505.0,496.0 C509.8,495.7 510.5,493.7 515.0,491.0 C519.5,488.3 525.8,485.7 532.0,480.0 C538.2,474.3 546.5,466.2 552.0,457.0 C557.5,447.8 562.2,432.0 565.0,425.0 C567.8,418.0 567.7,421.2 568.5,415.0 C569.3,408.8 569.8,397.3 569.6,388.0 C569.4,378.7 568.9,368.3 567.5,359.0 C566.1,349.7 563.8,339.0 561.0,332.0 C558.2,325.0 561.2,317.3 551.0,317.0 C540.8,316.7 521.0,328.7 500.0,330.0 C479.0,331.3 438.5,323.0 425.0,325.0Z" fill="none" stroke="#eab252" stroke-width="8" filter="url(#bl)" opacity="0.45"/></g>
<path d="M425.0,325.0 C424.0,327.8 420.8,334.7 419.0,342.0 C417.2,349.3 415.2,360.3 414.0,369.0 C412.8,377.7 412.2,386.0 412.0,394.0 C411.8,402.0 412.2,409.8 413.0,417.0 C413.8,424.2 415.8,431.8 417.0,437.0 C418.2,442.2 416.3,443.0 420.0,448.0 C423.7,453.0 431.8,461.0 439.0,467.0 C446.2,473.0 455.2,479.7 463.0,484.0 C470.8,488.3 479.0,491.0 486.0,493.0 C493.0,495.0 500.2,496.3 505.0,496.0 C509.8,495.7 510.5,493.7 515.0,491.0 C519.5,488.3 525.8,485.7 532.0,480.0 C538.2,474.3 546.5,466.2 552.0,457.0 C557.5,447.8 562.2,432.0 565.0,425.0 C567.8,418.0 567.7,421.2 568.5,415.0 C569.3,408.8 569.8,397.3 569.6,388.0 C569.4,378.7 568.9,368.3 567.5,359.0 C566.1,349.7 563.8,339.0 561.0,332.0 C558.2,325.0 552.7,319.5 551.0,317.0" fill="none" stroke="#1a140e" stroke-width="3.1" stroke-dasharray="40 2 18 2.5 9 2" stroke-linecap="butt"/>
<path d="M497.8,349 C504,366 506.5,385 506.7,410 C507,440 505,470 502,493" fill="none" stroke="#1a140e" stroke-width="2.1" stroke-dasharray="10 4 4 3 60 4 3 4 30 4 5 3"/>
<path d="M384.0,250.0 C381.2,242.7 377.0,235.5 375.0,228.0 C373.0,220.5 371.3,211.0 372.0,205.0 C372.7,199.0 375.8,195.5 379.0,192.0 C382.2,188.5 386.3,185.7 391.0,184.0 C395.7,182.3 401.8,182.0 407.0,182.0 C412.2,182.0 417.3,183.8 422.0,184.0 C426.7,184.2 430.8,184.3 435.0,183.0 C439.2,181.7 440.8,178.2 447.0,176.0 C453.2,173.8 463.2,170.7 472.0,170.0 C480.8,169.3 493.0,170.9 500.0,172.0 C507.0,173.1 509.3,175.5 514.0,176.5 C518.7,177.5 524.5,178.4 528.0,178.0 C531.5,177.6 532.0,175.2 535.0,174.0 C538.0,172.8 541.7,171.2 546.0,171.0 C550.3,170.8 557.2,171.8 561.0,173.0 C564.8,174.2 566.5,175.5 569.0,178.0 C571.5,180.5 574.1,184.1 576.0,188.0 C577.9,191.9 580.0,197.1 580.5,201.7 C581.0,206.3 579.9,211.3 579.0,215.5 C578.1,219.7 576.6,223.7 575.0,226.7 C573.4,229.7 570.4,229.2 569.4,233.6 C568.4,238.0 569.9,244.9 569.0,253.0 C568.1,261.1 566.2,273.5 564.0,282.0 C561.8,290.5 558.9,298.4 555.6,304.0 C552.3,309.6 547.8,312.6 544.0,315.6 C540.2,318.6 540.3,318.9 533.0,322.0 C525.7,325.1 510.3,331.7 500.0,334.0 C489.7,336.3 478.4,335.8 471.0,335.6 C463.6,335.4 461.9,334.5 455.6,333.0 C449.3,331.5 438.9,329.2 433.0,326.7 C427.1,324.2 424.0,321.1 420.0,317.8 C416.0,314.5 412.3,311.2 409.0,306.7 C405.7,302.2 402.8,296.8 400.0,291.0 C397.2,285.2 394.7,278.8 392.0,272.0 C389.3,265.2 386.8,257.3 384.0,250.0Z" fill="#f3cf78"/><g clip-path="url(#c6)"><ellipse cx="405" cy="280" rx="12" ry="25" transform="rotate(-20 405 280)" fill="#e8a440" opacity="0.5" filter="url(#bl3)"/><ellipse cx="555" cy="285" rx="10" ry="25" transform="rotate(15 555 285)" fill="#e8a440" opacity="0.5" filter="url(#bl3)"/><ellipse cx="490" cy="215" rx="55" ry="30" transform="rotate(0 490 215)" fill="#f8dc9a" opacity="0.7" filter="url(#bl3)"/><path d="M384.0,250.0 C381.2,242.7 377.0,235.5 375.0,228.0 C373.0,220.5 371.3,211.0 372.0,205.0 C372.7,199.0 375.8,195.5 379.0,192.0 C382.2,188.5 386.3,185.7 391.0,184.0 C395.7,182.3 401.8,182.0 407.0,182.0 C412.2,182.0 417.3,183.8 422.0,184.0 C426.7,184.2 430.8,184.3 435.0,183.0 C439.2,181.7 440.8,178.2 447.0,176.0 C453.2,173.8 463.2,170.7 472.0,170.0 C480.8,169.3 493.0,170.9 500.0,172.0 C507.0,173.1 509.3,175.5 514.0,176.5 C518.7,177.5 524.5,178.4 528.0,178.0 C531.5,177.6 532.0,175.2 535.0,174.0 C538.0,172.8 541.7,171.2 546.0,171.0 C550.3,170.8 557.2,171.8 561.0,173.0 C564.8,174.2 566.5,175.5 569.0,178.0 C571.5,180.5 574.1,184.1 576.0,188.0 C577.9,191.9 580.0,197.1 580.5,201.7 C581.0,206.3 579.9,211.3 579.0,215.5 C578.1,219.7 576.6,223.7 575.0,226.7 C573.4,229.7 570.4,229.2 569.4,233.6 C568.4,238.0 569.9,244.9 569.0,253.0 C568.1,261.1 566.2,273.5 564.0,282.0 C561.8,290.5 558.9,298.4 555.6,304.0 C552.3,309.6 547.8,312.6 544.0,315.6 C540.2,318.6 540.3,318.9 533.0,322.0 C525.7,325.1 510.3,331.7 500.0,334.0 C489.7,336.3 478.4,335.8 471.0,335.6 C463.6,335.4 461.9,334.5 455.6,333.0 C449.3,331.5 438.9,329.2 433.0,326.7 C427.1,324.2 424.0,321.1 420.0,317.8 C416.0,314.5 412.3,311.2 409.0,306.7 C405.7,302.2 402.8,296.8 400.0,291.0 C397.2,285.2 394.7,278.8 392.0,272.0 C389.3,265.2 386.8,257.3 384.0,250.0Z" fill="none" stroke="#e9ac4c" stroke-width="10" filter="url(#bl)" opacity="0.45"/></g>
<path d="M384.0,250.0 C381.2,242.7 377.0,235.5 375.0,228.0 C373.0,220.5 371.3,211.0 372.0,205.0 C372.7,199.0 375.8,195.5 379.0,192.0 C382.2,188.5 386.3,185.7 391.0,184.0 C395.7,182.3 401.8,182.0 407.0,182.0 C412.2,182.0 417.3,183.8 422.0,184.0 C426.7,184.2 430.8,184.3 435.0,183.0 C439.2,181.7 440.8,178.2 447.0,176.0 C453.2,173.8 463.2,170.7 472.0,170.0 C480.8,169.3 493.0,170.9 500.0,172.0 C507.0,173.1 509.3,175.5 514.0,176.5 C518.7,177.5 524.5,178.4 528.0,178.0 C531.5,177.6 532.0,175.2 535.0,174.0 C538.0,172.8 541.7,171.2 546.0,171.0 C550.3,170.8 557.2,171.8 561.0,173.0 C564.8,174.2 566.5,175.5 569.0,178.0 C571.5,180.5 574.1,184.1 576.0,188.0 C577.9,191.9 580.0,197.1 580.5,201.7 C581.0,206.3 579.9,211.3 579.0,215.5 C578.1,219.7 576.6,223.7 575.0,226.7 C573.4,229.7 570.4,229.2 569.4,233.6 C568.4,238.0 569.9,244.9 569.0,253.0 C568.1,261.1 566.2,273.5 564.0,282.0 C561.8,290.5 558.9,298.4 555.6,304.0 C552.3,309.6 547.8,312.6 544.0,315.6 C540.2,318.6 540.3,318.9 533.0,322.0 C525.7,325.1 510.3,331.7 500.0,334.0 C489.7,336.3 478.4,335.8 471.0,335.6 C463.6,335.4 461.9,334.5 455.6,333.0 C449.3,331.5 438.9,329.2 433.0,326.7 C427.1,324.2 424.0,321.1 420.0,317.8 C416.0,314.5 412.3,311.2 409.0,306.7 C405.7,302.2 402.8,296.8 400.0,291.0 C397.2,285.2 394.7,278.8 392.0,272.0 C389.3,265.2 386.8,257.3 384.0,250.0Z" fill="none" stroke="#1a140e" stroke-width="3.1" stroke-dasharray="40 2 18 2.5 9 2" stroke-linecap="butt"/>
<path d="M429.0,324.0 C430.5,325.2 433.5,329.0 438.0,331.0 C442.5,333.0 450.5,335.0 456.0,336.0 C461.5,337.0 468.5,336.8 471.0,337.0" fill="none" stroke="#1a140e" stroke-width="2.2" stroke-dasharray="40 2 18 2.5 9 2" stroke-linecap="butt"/>
<path d="M384,218 C387,207 398,201 422,200.5 C414,210 404,223 394,240 C387,233 383,226 384,218Z" fill="#e8953a"/>
<path d="M383,218 C387,206 400,200 423,200" fill="none" stroke="#1a140e" stroke-width="3"/>
<path d="M423,201 C414,211 403,223 394,241" fill="none" stroke="#1a140e" stroke-width="2.6" stroke-dasharray="9 3 5 3"/>
<path d="M537.5,194.7 C544,189 556,187 565,194.7 C570,201 569,209 565,214 C556,208 545,201 537.5,194.7Z" fill="#e8953a"/>
<path d="M537,195 C544,188 557,186 566,195 C571,202 569,210 565,215" fill="none" stroke="#1a140e" stroke-width="3"/>
<path d="M537.5,195 C546,203 554,210 561,219" fill="none" stroke="#1a140e" stroke-width="2.6" stroke-dasharray="10 3 4 3"/>
<path d="M449.0,249.0 C452.3,246.5 460.0,240.5 466.7,237.8 C473.4,235.1 482.3,233.4 489.0,233.0 C495.7,232.6 501.5,234.4 506.7,235.6 C511.9,236.8 516.7,238.2 520.0,240.0 C523.3,241.8 524.5,242.7 526.7,246.7 C528.9,250.7 532.0,257.3 533.0,264.0 C534.0,270.7 534.5,279.6 533.0,286.7 C531.5,293.8 528.4,301.1 524.0,306.7 C519.6,312.2 512.5,317.4 506.7,320.0 C500.9,322.6 495.7,322.7 489.0,322.0 C482.3,321.3 473.0,319.3 466.7,315.6 C460.4,311.9 454.8,306.3 451.0,300.0 C447.2,293.7 444.7,285.8 444.0,278.0 C443.3,270.2 445.9,257.8 446.7,253.0 C447.5,248.2 445.7,251.5 449.0,249.0Z" fill="#f5d890" opacity="0.3"/>
<path d="M456.0,243.0 C457.8,242.1 461.2,239.5 466.7,237.8 C472.2,236.1 482.3,233.4 489.0,233.0 C495.7,232.6 502.5,234.8 506.7,235.6 C510.9,236.4 512.8,237.6 514.0,238.0" fill="none" stroke="#2a2016" stroke-width="1.8" stroke-dasharray="9 3 4 3"/>
<path d="M524.0,246.7 C524.8,248.2 527.5,252.1 529.0,256.0 C530.5,259.9 532.3,264.9 533.0,270.0 C533.7,275.1 534.5,280.6 533.0,286.7 C531.5,292.8 528.4,301.1 524.0,306.7 C519.6,312.2 512.5,317.4 506.7,320.0 C500.9,322.6 495.7,322.7 489.0,322.0 C482.3,321.3 473.0,319.3 466.7,315.6 C460.4,311.9 454.8,306.3 451.0,300.0 C447.2,293.7 444.7,285.3 444.0,278.0 C443.3,270.7 446.2,259.7 446.7,256.0" fill="none" stroke="#2a2016" stroke-width="1.9" stroke-dasharray="12 3 6 3 3 3"/>
<path d="M423,207 C430,218 437,230 444,242" fill="none" stroke="#6a4818" stroke-width="1.3" stroke-dasharray="6 4"/>
<path d="M537,200 C533,212 528,225 522,234" fill="none" stroke="#6a4818" stroke-width="1.3" stroke-dasharray="6 4"/>
<circle cx="449" cy="243.5" r="4.6" fill="#111"/>
<circle cx="519" cy="238" r="5" fill="#111"/>
<circle cx="520.5" cy="236.5" r="1.3" fill="#9aa4aa"/><circle cx="450.3" cy="242" r="1.1" fill="#9aa4aa"/>
<ellipse cx="485.5" cy="252" rx="12" ry="9" fill="#141414"/>
<ellipse cx="484.5" cy="248.5" rx="6" ry="2.3" fill="#8c9aa6" opacity="0.85"/>
<path d="M487.5,260 C488.5,268 489,277 489,285 M469,298 C475,297 483,292 489,285.5 C492,290 500,295 509,295.5" fill="none" stroke="#111" stroke-width="2.4" stroke-linecap="round"/>
<path d="M450.0,346.7 C451.9,343.7 460.2,339.6 466.7,337.8 C473.2,336.0 484.6,333.7 489.0,335.6 C493.4,337.5 493.8,345.7 493.0,349.0 C492.2,352.3 487.3,351.9 484.4,355.6 C481.5,359.3 478.6,370.3 475.6,371.0 C472.7,371.7 470.0,362.6 466.7,360.0 C463.4,357.4 458.4,357.8 455.6,355.6 C452.8,353.4 448.1,349.7 450.0,346.7Z" fill="#c01c2c" stroke="#4a0a10" stroke-width="2"/>
<path d="M502.0,333.0 C505.0,330.4 514.4,329.8 520.0,329.0 C525.6,328.2 533.8,325.9 535.6,328.5 C537.4,331.1 532.9,339.5 531.0,344.4 C529.1,349.3 527.4,356.7 524.4,357.8 C521.4,358.9 516.7,353.2 513.0,351.0 C509.3,348.8 503.8,347.4 502.0,344.4 C500.2,341.4 499.0,335.6 502.0,333.0Z" fill="#c01c2c" stroke="#4a0a10" stroke-width="2"/>
<path d="M455,347 C462,350 468,356 472,362" fill="none" stroke="#e8707a" stroke-width="3" opacity="0.5"/>
<path d="M527,336 C526,342 524,348 522,352" fill="none" stroke="#e8707a" stroke-width="2.5" opacity="0.5"/>
<ellipse cx="497" cy="339.5" rx="6.5" ry="7.5" fill="#c42a38"/>
<path d="M507,372 L507,384 L509.5,381.5 L512,386 L514,385 L511.5,380.5 L515,380.5Z" fill="#111" stroke="#f0f0f0" stroke-width="0.7"/>
<rect x="520" y="385" width="3.5" height="3.5" fill="#111"/></svg>
<!-- v scrollbar -->
<div class="a" style="left:966px;top:80px;width:16px;height:587px;background:#252d2d"></div>
<div class="a" style="left:969px;top:86px;border-left:5px solid transparent;border-right:5px solid transparent;border-bottom:6px solid #e8ecec"></div>
<div class="a" style="left:969px;top:656px;border-left:5px solid transparent;border-right:5px solid transparent;border-top:6px solid #e8ecec"></div>
<div class="a" style="left:968px;top:368px;width:13px;height:14px;background:#a8adad"></div>
<!-- status bar -->
<div class="a" style="left:71px;top:666px;width:911px;height:15px;background:#2f393a"></div>
<div class="a" style="left:469px;top:666px;width:497px;height:15px;background:#1f2929"></div>
<div class="a" style="left:75px;top:668px;width:38px;height:13px;background:#b0b4b4;border:1px solid #4a5252"></div>
<div class="t" style="left:78px;top:671px;font-size:8px;color:#333">100%</div>
<div class="dd" style="left:115px;top:668px;height:13px"></div>
<div class="t" style="left:136px;top:671px;font-size:7px;color:#6a7272">&#124;&#9664; &#9664;</div>
<div class="a" style="left:170px;top:668px;width:38px;height:13px;background:#b0b4b4;border:1px solid #4a5252"></div>
<div class="dd" style="left:210px;top:668px;height:13px"></div>
<div class="t" style="left:230px;top:671px;font-size:7px;color:#6a7272">&#9654; &#9654;&#124;</div>
<div class="t" style="left:338px;top:671px;font-size:9px;color:#d0d4d4">Selection</div>
<div class="a" style="left:458px;top:667px;width:1px;height:15px;background:#1a2222"></div>
<div class="a" style="left:459px;top:667px;width:10px;height:15px;background:#2e3838"></div>
<div class="a" style="left:461px;top:671px;border-top:3.5px solid transparent;border-bottom:3.5px solid transparent;border-left:4px solid #e0e4e4"></div>
<div class="a" style="left:474px;top:671px;border-top:3.5px solid transparent;border-bottom:3.5px solid transparent;border-right:4px solid #e0e4e4"></div>
<div class="a" style="left:711px;top:668px;width:13px;height:13px;background:#a8adad"></div>
<div class="a" style="left:954px;top:670px;border-top:4px solid transparent;border-bottom:4px solid transparent;border-left:5px solid #e0e4e4"></div>
<div class="a" style="left:966px;top:667px;width:16px;height:13px;background:#2c3636"></div>

<!-- ============ right panels ============ -->
<div class="a" style="left:982px;top:62px;width:230px;height:620px;background:#222a2a;"></div>
<div class="a" style="left:1198px;top:66px;width:9px;height:4px;background:#9aa0a0;clip-path:polygon(0 50%,40% 0,40% 100%,60% 50%,100% 0,100% 100%)"></div>
<div class="a" style="left:985px;top:74px;width:227px;height:15px;background:#262e2e;"></div>
<div class="t" style="left:990px;top:79.0px;font-size:9.6px;color:#8a9292;">Color</div>
<div class="a" style="left:1022px;top:74px;width:74px;height:16px;background:#3a4343;"></div>
<div class="t" style="left:1027px;top:77.0px;font-size:8px;color:#c0c4c4;">&#8661;</div>
<div class="t" style="left:1034px;top:79.0px;font-size:9.2px;color:#e4e8e8;font-weight:bold">Color Guide</div>
<div class="a" style="left:1193px;top:80px;border-top:2px solid transparent;border-bottom:2px solid transparent;border-left:3px solid #c8cccc"></div>
<div class="a" style="left:1198px;top:78px;width:7px;height:8px;background:#5a6464;"></div>
<div class="a" style="left:985px;top:89px;width:227px;height:243px;background:#3a4343;"></div>
<div class="a" style="left:990px;top:97px;width:19px;height:20px;background:#f6f6f6;border:2px solid #2a3232;box-shadow:0 0 0 1px #6a7272"></div>
<div class="a" style="left:1014px;top:96px;width:178px;height:23px;background:#2a3232;border:1px solid #5a6464"></div>
<div class="a" style="left:1017px;top:99px;width:12px;height:17px;background:#f4f4f4;border:1px solid #333"></div>
<div class="a" style="left:1031px;top:99px;width:16px;height:17px;background:#aeaaa8;"></div>
<div class="a" style="left:1047px;top:99px;width:14px;height:17px;background:#b6b4a8;"></div>
<div class="a" style="left:1061px;top:99px;width:14px;height:17px;background:#c4d0bc;"></div>
<div class="a" style="left:1075px;top:99px;width:7px;height:17px;background:#bcc6c8;"></div>
<div class="a" style="left:1082px;top:99px;width:12px;height:17px;background:#9a9ccc;"></div>
<div class="a" style="left:1095px;top:99px;width:95px;height:17px;background:#e6e6e6;"></div>
<div class="a" style="left:1193px;top:97px;width:10px;height:21px;background:#353e3e;border:1px solid #2a3232"></div>
<div class="a" style="left:1196px;top:106px;width:4px;height:4px;background:#c8cccc;"></div>
<div class="t" style="left:1012px;top:127.0px;font-size:9.5px;color:#d8dcdc;font-weight:bold">Shades</div>
<div class="a" style="left:1096px;top:129px;border-left:2.5px solid transparent;border-right:2.5px solid transparent;border-top:3px solid #d0d4d4"></div>
<div class="t" style="left:1157px;top:127.0px;font-size:9.5px;color:#d8dcdc;font-weight:bold">Tints</div>
<div class="a" style="left:989px;top:141px;width:217px;height:71px;background:#1e2626;"></div>
<div class="a" style="left:990px;top:142px;width:23px;height:13px;background:#161e1e;"></div>
<div class="a" style="left:1014px;top:142px;width:23px;height:13px;background:#5c6262;"></div>
<div class="a" style="left:1038px;top:142px;width:23px;height:13px;background:#9ea2a2;"></div>
<div class="a" style="left:1062px;top:142px;width:23px;height:13px;background:#cfd1d1;"></div>
<div class="a" style="left:1086px;top:142px;width:23px;height:13px;background:#f4f4f4;"></div>
<div class="a" style="left:1110px;top:142px;width:23px;height:13px;background:#f7f7f7;"></div>
<div class="a" style="left:1134px;top:142px;width:23px;height:13px;background:#fbfbfb;"></div>
<div class="a" style="left:1158px;top:142px;width:23px;height:13px;background:#fdfdfd;"></div>
<div class="a" style="left:1182px;top:142px;width:23px;height:13px;background:#ffffff;"></div>
<div class="a" style="left:990px;top:156px;width:23px;height:13px;background:#161e1e;"></div>
<div class="a" style="left:1014px;top:156px;width:23px;height:13px;background:#5a6060;"></div>
<div class="a" style="left:1038px;top:156px;width:23px;height:13px;background:#918f90;"></div>
<div class="a" style="left:1062px;top:156px;width:23px;height:13px;background:#b3acae;"></div>
<div class="a" style="left:1086px;top:156px;width:23px;height:13px;background:#c5b8bc;"></div>
<div class="a" style="left:1110px;top:156px;width:23px;height:13px;background:#cdbfc3;"></div>
<div class="a" style="left:1134px;top:156px;width:23px;height:13px;background:#d8cfd2;"></div>
<div class="a" style="left:1158px;top:156px;width:23px;height:13px;background:#e7e2e4;"></div>
<div class="a" style="left:1182px;top:156px;width:23px;height:13px;background:#f5f3f4;"></div>
<div class="a" style="left:990px;top:170px;width:23px;height:13px;background:#161e1e;"></div>
<div class="a" style="left:1014px;top:170px;width:23px;height:13px;background:#5a6060;"></div>
<div class="a" style="left:1038px;top:170px;width:23px;height:13px;background:#949694;"></div>
<div class="a" style="left:1062px;top:170px;width:23px;height:13px;background:#b4b4ac;"></div>
<div class="a" style="left:1086px;top:170px;width:23px;height:13px;background:#c4c4b8;"></div>
<div class="a" style="left:1110px;top:170px;width:23px;height:13px;background:#cdcdc1;"></div>
<div class="a" style="left:1134px;top:170px;width:23px;height:13px;background:#d8d8ce;"></div>
<div class="a" style="left:1158px;top:170px;width:23px;height:13px;background:#e6e6de;"></div>
<div class="a" style="left:1182px;top:170px;width:23px;height:13px;background:#f4f4ef;"></div>
<div class="a" style="left:990px;top:184px;width:23px;height:13px;background:#161e1e;"></div>
<div class="a" style="left:1014px;top:184px;width:23px;height:13px;background:#5a6262;"></div>
<div class="a" style="left:1038px;top:184px;width:23px;height:13px;background:#a6aaa6;"></div>
<div class="a" style="left:1062px;top:184px;width:23px;height:13px;background:#c8d2c6;"></div>
<div class="a" style="left:1086px;top:184px;width:23px;height:13px;background:#e0ecdc;"></div>
<div class="a" style="left:1110px;top:184px;width:23px;height:13px;background:#e4eee0;"></div>
<div class="a" style="left:1134px;top:184px;width:23px;height:13px;background:#eaf2e8;"></div>
<div class="a" style="left:1158px;top:184px;width:23px;height:13px;background:#f1f6f0;"></div>
<div class="a" style="left:1182px;top:184px;width:23px;height:13px;background:#fafcfa;"></div>
<div class="a" style="left:990px;top:198px;width:23px;height:13px;background:#161e1e;"></div>
<div class="a" style="left:1014px;top:198px;width:23px;height:13px;background:#5a6060;"></div>
<div class="a" style="left:1038px;top:198px;width:23px;height:13px;background:#8e8ea4;"></div>
<div class="a" style="left:1062px;top:198px;width:23px;height:13px;background:#a4a4c8;"></div>
<div class="a" style="left:1086px;top:198px;width:23px;height:13px;background:#a8a8dc;"></div>
<div class="a" style="left:1110px;top:198px;width:23px;height:13px;background:#b8b8e2;"></div>
<div class="a" style="left:1134px;top:198px;width:23px;height:13px;background:#cacaea;"></div>
<div class="a" style="left:1158px;top:198px;width:23px;height:13px;background:#dfdff2;"></div>
<div class="a" style="left:1182px;top:198px;width:23px;height:13px;background:#f2f2fa;"></div>
<div class="a" style="left:988px;top:212px;width:219px;height:102px;background:#394343;border:1px solid #303939"></div>
<div class="a" style="left:994px;top:319px;width:11px;height:10px;background:#b0b6b6;clip-path:polygon(0 0,100% 0,100% 100%,0 100%)"></div>
<div class="a" style="left:997px;top:319px;width:1px;height:10px;background:#5a6262;"></div>
<div class="a" style="left:1001px;top:319px;width:1px;height:10px;background:#5a6262;"></div>
<div class="t" style="left:1018px;top:320.0px;font-size:9.8px;color:#d8dcdc;">None</div>
<div class="a" style="left:1149px;top:318px;width:12px;height:12px;background:#9aa0a0;border-radius:50%;border:2px solid #c8cccc"></div>
<div class="a" style="left:1174px;top:318px;width:12px;height:10px;background:#aab0b0;"></div>
<div class="a" style="left:1171px;top:324px;width:5px;height:5px;background:#e8ecec;"></div>
<div class="a" style="left:985px;top:332px;width:227px;height:3px;background:#222a2a;"></div>
<div class="a" style="left:985px;top:335px;width:227px;height:16px;background:#262e2e;"></div>
<div class="a" style="left:987px;top:335px;width:51px;height:17px;background:#3a4343;"></div>
<div class="t" style="left:991px;top:340.0px;font-size:9.2px;color:#e4e8e8;font-weight:bold">Swatches</div>
<div class="t" style="left:1046px;top:340.0px;font-size:9.6px;color:#8a9292;">Brushes</div>
<div class="t" style="left:1093px;top:340.0px;font-size:9.6px;color:#8a9292;">Symbols</div>
<div class="a" style="left:1193px;top:341px;border-top:2px solid transparent;border-bottom:2px solid transparent;border-left:3px solid #c8cccc"></div>
<div class="a" style="left:1198px;top:339px;width:7px;height:8px;background:#5a6464;"></div>
<div class="a" style="left:985px;top:351px;width:227px;height:243px;background:#3a4343;"></div>
<div class="a" style="left:987px;top:355px;width:220px;height:221px;background:#394343;border:1px solid #303939"></div>
<div class="a" style="left:1195px;top:357px;width:11px;height:217px;background:#313a3a;"></div>
<div class="a" style="left:1198px;top:361px;border-left:3px solid transparent;border-right:3px solid transparent;border-bottom:4px solid #a0a6a6"></div>
<div class="a" style="left:1198px;top:565px;border-left:3px solid transparent;border-right:3px solid transparent;border-top:4px solid #a0a6a6"></div>
<svg class="a" style="left:988px;top:356px" width="30" height="16"><rect x="1" y="2" width="12" height="12" fill="#fff"/><path d="M1,14 L13,2" stroke="#c0102a" stroke-width="2"/><rect x="14" y="2" width="12" height="12" fill="#f0f0f0"/><circle cx="20" cy="8" r="3.5" fill="#333"/><path d="M14,2 h4 v4 h-4z M22,10 h4 v4 h-4z M22,2 h4 v4h-4z M14,10 h4 v4 h-4z" fill="#fff"/></svg>
<svg class="a" style="left:988px;top:577px" width="220" height="17"><rect x="4" y="3" width="9" height="9" fill="#c0c4c4"/><rect x="7" y="5" width="3" height="6" fill="#5a6262"/><path d="M13,12 h4" stroke="#c0c4c4"/><rect x="92" y="3" width="11" height="9" fill="#c0c4c4"/><path d="M94,5 h7 M94,8 h7" stroke="#5a6262"/><path d="M103,12 h4" stroke="#c0c4c4"/><rect x="117" y="3" width="9" height="9" fill="#4e5858"/><rect x="140" y="4" width="12" height="9" fill="#d0d4d4"/><rect x="140" y="2" width="5" height="3" fill="#d0d4d4"/><rect x="168" y="3" width="10" height="10" fill="#c0c4c4"/><rect x="171" y="3" width="4" height="4" fill="#5a6262"/><rect x="193" y="3" width="9" height="10" fill="#4e5858"/></svg>
<div class="a" style="left:985px;top:594px;width:227px;height:3px;background:#222a2a;"></div>
<div class="a" style="left:985px;top:597px;width:227px;height:16px;background:#262e2e;"></div>
<div class="a" style="left:987px;top:597px;width:46px;height:17px;background:#3a4343;"></div>
<div class="t" style="left:989px;top:600.0px;font-size:8px;color:#c0c4c4;">&#8661;</div>
<div class="t" style="left:996px;top:602.0px;font-size:9.2px;color:#e4e8e8;font-weight:bold">Stroke</div>
<div class="t" style="left:1039px;top:602.0px;font-size:9.6px;color:#8a9292;">Gradient</div>
<div class="t" style="left:1092px;top:602.0px;font-size:9.6px;color:#8a9292;">Transparency</div>
<div class="a" style="left:1193px;top:603px;border-top:2px solid transparent;border-bottom:2px solid transparent;border-left:3px solid #c8cccc"></div>
<div class="a" style="left:1198px;top:601px;width:7px;height:8px;background:#5a6464;"></div>
<div class="a" style="left:985px;top:613px;width:227px;height:29px;background:#3a4343;"></div>
<div class="t" style="left:988px;top:624.5px;font-size:9px;color:#c8cccc;">Weight:</div>
<div class="a" style="left:1029px;top:622px;border-left:3px solid transparent;border-right:3px solid transparent;border-bottom:4px solid #e0e4e4"></div>
<div class="a" style="left:1029px;top:631px;border-left:3px solid transparent;border-right:3px solid transparent;border-top:4px solid #e0e4e4"></div>
<div class="a" style="left:1041px;top:621px;width:48px;height:15px;background:#b0b4b4;border:1px solid #6a7070"></div>
<div class="t" style="left:1045px;top:625.0px;font-size:8px;color:#222;">1 pt</div>
<div class="a" style="left:1092px;top:621px;width:11px;height:15px;background:#353e3e;border:1px solid #2a3232"></div>
<div class="a" style="left:1094px;top:627px;border-left:3px solid transparent;border-right:3px solid transparent;border-top:4px solid #e0e4e4"></div>
<div class="a" style="left:985px;top:642px;width:227px;height:3px;background:#222a2a;"></div>
<div class="a" style="left:985px;top:645px;width:227px;height:17px;background:#262e2e;"></div>
<div class="a" style="left:987px;top:645px;width:61px;height:17px;background:#3a4343;"></div>
<div class="t" style="left:991px;top:649.5px;font-size:9.2px;color:#e4e8e8;font-weight:bold">Appearance</div>
<div class="t" style="left:1055px;top:649.5px;font-size:9.6px;color:#8a9292;">Graphic Styles</div>
<div class="a" style="left:1193px;top:651px;border-top:2px solid transparent;border-bottom:2px solid transparent;border-left:3px solid #c8cccc"></div>
<div class="a" style="left:1198px;top:649px;width:7px;height:8px;background:#5a6464;"></div>
<div class="a" style="left:985px;top:662px;width:227px;height:2px;background:#222a2a;"></div>
<div class="a" style="left:985px;top:664px;width:227px;height:16px;background:#262e2e;"></div>
<div class="a" style="left:987px;top:664px;width:37px;height:16px;background:#3a4343;"></div>
<div class="t" style="left:990px;top:669.0px;font-size:9.2px;color:#e4e8e8;font-weight:bold">Layers</div>
<div class="t" style="left:1031px;top:669.0px;font-size:9.6px;color:#8a9292;">Artboards</div>
<div class="a" style="left:1193px;top:670px;border-top:2px solid transparent;border-bottom:2px solid transparent;border-left:3px solid #c8cccc"></div>
<div class="a" style="left:1198px;top:668px;width:7px;height:8px;background:#5a6464;"></div>

<!-- ============ taskbar ============ -->
<div class="a" style="left:0;top:680px;width:1212px;height:2px;background:#0c1518"></div>
<div class="a" style="left:0;top:682px;width:1212px;height:38px;background:#a0b4c0"></div>
<div class="a" style="left:0;top:682px;width:1212px;height:5px;background:#b8c8d2"></div>
<div class="a" style="left:0;top:716px;width:1212px;height:2px;background:#91a5b1"></div>
<div class="a" style="left:0;top:718px;width:1212px;height:2px;background:#bccad4"></div>
<div class="a" style="left:132px;top:684px;width:57px;height:34px;background:#b4c4ce;border:1px solid #d4e0e6;box-shadow:inset 0 0 0 1px #a8b8c2"></div>
<svg class="a" style="left:24px;top:684px" width="40" height="34" viewBox="0 0 40 34">
<path d="M8,27 C2,22 10,8 22,5 C28,3 33,4 32,8" fill="none" stroke="#e8e090" stroke-width="2.2"/>
<path d="M30,18 C30,11 25,8 20,8 C13,8 9,13 9,19 C9,25 14,29 20,29 C25,29 28,26 29,23 L23,23 C22,25 21,25 20,25 C17,25 15,23 15,20 L30,20 Z M15,16 C16,13 18,12 20,12 C22,12 24,13 24,16 Z" fill="#4ac0e0" stroke="#2a90b8" stroke-width="0.8"/>
</svg>
<svg class="a" style="left:84px;top:686px" width="36" height="32" viewBox="0 0 36 32">
<path d="M4,6 L13,6 L15,9 L31,9 L31,28 L4,28 Z" fill="#e8d890"/>
<path d="M4,11 L31,11 L31,28 L4,28Z" fill="#f2e6a8"/>
<path d="M4,20 C12,18 22,18 31,20 L31,28 L4,28Z" fill="#a8d0d8"/>
<path d="M10,24 h14" stroke="#5aa0b8" stroke-width="1.5"/>
<rect x="12" y="3" width="10" height="6" fill="#f8f4e0"/>
</svg>
<div class="a" style="left:148px;top:689px;width:24px;height:22px;background:#2a1806;border:1px solid #8a6a3a"></div>
<div class="t" style="left:152px;top:694px;font-size:12px;font-weight:bold;color:#e6c078;letter-spacing:-0.5px">AI</div>
<div class="a" style="left:1036px;top:702px;width:6px;height:2px;background:#e8eef2"></div>
<svg class="a" style="left:1054px;top:692px" width="70" height="22" viewBox="0 0 70 22">
<path d="M3,3 v16" stroke="#6a7880" stroke-width="1.5"/><path d="M4,4 h7 l1,2 h3 v7 h-7 l-1,-2 h-3z" fill="#e8eef2"/>
<rect x="26" y="4" width="3" height="12" fill="#7a8890"/>
<circle cx="35" cy="15" r="5" fill="#a01838" stroke="#e8b8c8" stroke-width="1"/><path d="M33,13 l4,4 M37,13 l-4,4" stroke="#fff" stroke-width="1.2"/>
<path d="M47,11 L52,6 L52,17Z" fill="#e8eef2"/><path d="M55,7 C58,10 58,13 55,16 M58,5 C62,9 62,14 58,18" fill="none" stroke="#c8d2d8" stroke-width="1.2"/>
</svg>
<div class="t" style="left:1148px;top:690px;font-size:10.4px;color:#f4f8fa">10:41</div>
<div class="t" style="left:1131px;top:705.5px;font-size:11.2px;color:#f4f8fa">06/02/2013</div>

</div></body></html>
